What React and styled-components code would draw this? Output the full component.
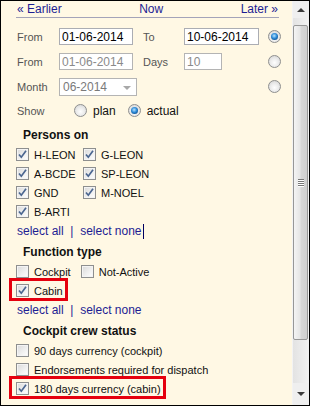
import React from "react";
import styled, { createGlobalStyle } from "styled-components";

const GlobalStyle = createGlobalStyle`
  html, body {
    margin: 0;
    padding: 0;
    background: #fff;
  }
  body {
    font-family: "Liberation Sans", Arial, sans-serif;
  }
`;

const Frame = styled.div`
  width: 310px;
  height: 406px;
  box-sizing: border-box;
  border: 1px solid #000;
  background: #fff8e4;
  display: flex;
  overflow: hidden;
`;

const Content = styled.div`
  flex: 1;
  padding: 0 11px 0 15px;
  min-width: 0;
`;

const Nav = styled.div`
  display: flex;
  justify-content: space-between;
  height: 16px;
  line-height: 16px;
  padding: 0 1px;
  margin-right: 2px;
  border-bottom: 1px solid #a3a3b8;
  font-size: 12px;
  color: #1d1d93;
`;

const FormRows = styled.div`
  display: flex;
  flex-direction: column;
  gap: 8px;
  margin-top: 10px;
`;

const Row = styled.div`
  display: flex;
  align-items: center;
  height: 17px;
`;

const Label = styled.span`
  width: ${(p) => p.$w || 43}px;
  margin-left: ${(p) => p.$ml || 0}px;
  padding-left: 1px;
  box-sizing: border-box;
  font-size: 11px;
  color: #555;
  flex-shrink: 0;
`;

const Input = styled.input`
  width: ${(p) => p.$w}px;
  height: 17px;
  box-sizing: border-box;
  border: 1px solid ${(p) => (p.disabled ? "#b4b4b4" : "#abadb3")};
  background: #fff;
  padding: 0 2px;
  font-family: "Liberation Sans", Arial, sans-serif;
  font-size: 12px;
  color: ${(p) => (p.disabled ? "#8a8a8a" : "#000")};
  outline: none;
  flex-shrink: 0;
`;

const FakeSelect = styled.div`
  width: 78px;
  height: 18px;
  box-sizing: border-box;
  border: 1px solid #b4b4b4;
  background: #fff;
  display: flex;
  align-items: center;
  justify-content: space-between;
  padding: 0 5px 0 3px;
  font-size: 12px;
  color: #7a7a7a;

  &::after {
    content: "";
    border-left: 4px solid transparent;
    border-right: 4px solid transparent;
    border-top: 4px solid #a8a8a8;
    margin-top: 2px;
  }
`;

const RightRadio = styled.span`
  margin-left: auto;
  display: flex;
`;

const Radio = styled.span`
  width: 13px;
  height: 13px;
  box-sizing: border-box;
  border-radius: 50%;
  border: 1px solid #8e8f8f;
  background: radial-gradient(circle at 50% 60%, #fefefe 0%, #ececec 45%, #cfcfcf 100%);
  display: inline-flex;
  align-items: center;
  justify-content: center;
  flex-shrink: 0;

  &::after {
    content: "";
    width: 7px;
    height: 7px;
    border-radius: 50%;
    display: ${(p) => (p.$on ? "block" : "none")};
    background: radial-gradient(circle at 45% 40%, #b8e4ff 0%, #2c8ad8 45%, #0d4f8e 80%, #183a5e 100%);
  }
`;

const ShowRow = styled.div`
  display: flex;
  align-items: center;
  height: 19px;
  margin: 6px 0 7px;
  font-size: 12px;
  color: #111;
`;

const Option = styled.label`
  display: inline-flex;
  align-items: center;
  gap: 6px;
  margin-right: 12px;
`;

const Heading = styled.div`
  height: 16px;
  line-height: 16px;
  margin: 3px 0 2px;
  padding-left: 7px;
  font-size: 12px;
  font-weight: bold;
  color: #111;
`;

const CheckGrid = styled.div`
  display: grid;
  grid-template-columns: 67px 67px;
`;

const CheckList = styled.div`
  display: flex;
  flex-wrap: wrap;
  align-items: center;
`;

const CheckRow = styled.label`
  position: relative;
  display: inline-flex;
  align-items: center;
  gap: 5px;
  height: 19px;
  margin-right: 10px;
  font-size: 11px;
  color: #111;
  white-space: nowrap;

  &::after {
    content: "";
    display: ${(p) => (p.$marked ? "block" : "none")};
    position: absolute;
    left: -7px;
    right: -5px;
    top: -3px;
    bottom: -1px;
    border: 3px solid #e5000e;
  }
`;

const LineBreak = styled.div`
  flex-basis: 100%;
  height: 0;
`;

const Box = styled.span`
  width: 13px;
  height: 13px;
  box-sizing: border-box;
  border: 1px solid #8e8f8f;
  background: linear-gradient(135deg, #d9d9d9 0%, #f1f1f1 60%, #ffffff 100%);
  box-shadow: inset 0 0 0 1px #f4f4f4;
  display: inline-flex;
  flex-shrink: 0;

  svg {
    display: block;
  }
`;

const Links = styled.div`
  height: 19px;
  line-height: 19px;
  margin-top: 1px;
  padding-left: 1px;
  font-size: 12px;
  color: #1d1d93;
  display: flex;
  align-items: center;
  white-space: pre;
`;

const Caret = styled.span`
  width: 1px;
  height: 15px;
  background: #000060;
  margin-left: 1px;
`;

const Scrollbar = styled.div`
  width: 16px;
  display: flex;
  flex-direction: column;
  background: #eaeaea;
  border-left: 1px solid #f3f3f3;
`;

const ScrollButton = styled.div`
  height: ${(p) => p.$h}px;
  display: flex;
  align-items: center;
  justify-content: center;
  background: #efefef;

  &::after {
    content: "";
    border-left: 4px solid transparent;
    border-right: 4px solid transparent;
    ${(p) => (p.$down ? "border-top" : "border-bottom")}: 4px solid #3a3a3a;
  }
`;

const Track = styled.div`
  flex: 1;
  display: flex;
  flex-direction: column;
  padding: 7px 0 0;
  background: linear-gradient(to right, #e3e3e3, #f2f2f2);
`;

const Thumb = styled.div`
  height: 315px;
  margin: 0 1px 0 0;
  box-sizing: border-box;
  border: 1px solid #979797;
  border-radius: 2px;
  background: linear-gradient(to right, #f4f4f4 0%, #e6e6e6 45%, #d6d6d6 55%, #cfcfcf 100%);
  display: flex;
  flex-direction: column;
  align-items: center;
  justify-content: center;
  gap: 1px;
`;

const Grip = styled.span`
  width: 6px;
  height: 1px;
  background: #777;
  box-shadow: 0 1px 0 #fff;
`;

function Checkbox({ checked }) {
  return (
    <Box>
      {checked && (
        <svg width="11" height="11" viewBox="0 0 11 11">
          <path
            d="M2 5.5 L4.3 8.2 L9 1.8"
            fill="none"
            stroke="#4b6690"
            strokeWidth="1.7"
          />
        </svg>
      )}
    </Box>
  );
}

function Check({ label, checked, marked }) {
  return (
    <CheckRow $marked={marked}>
      <Checkbox checked={checked} />
      {label}
    </CheckRow>
  );
}

function SelectLinks({ caret }) {
  return (
    <Links>
      {"select all  |  select none"}
      {caret && <Caret />}
    </Links>
  );
}

const persons = ["H-LEON", "G-LEON", "A-BCDE", "SP-LEON", "GND", "M-NOEL", "B-ARTI"];

export default function App() {
  return (
    <>
      <GlobalStyle />
      <Frame>
        <Content>
          <Nav>
            <span>« Earlier</span>
            <span>Now</span>
            <span>Later »</span>
          </Nav>

          <FormRows>
            <Row>
              <Label>From</Label>
              <Input $w={74} defaultValue="01-06-2014" />
              <Label $ml={9} $w={42}>To</Label>
              <Input $w={75} defaultValue="10-06-2014" />
              <RightRadio>
                <Radio $on />
              </RightRadio>
            </Row>
            <Row>
              <Label>From</Label>
              <Input $w={74} disabled defaultValue="01-06-2014" />
              <Label $ml={9} $w={42}>Days</Label>
              <Input $w={38} disabled defaultValue="10" />
              <RightRadio>
                <Radio />
              </RightRadio>
            </Row>
            <Row>
              <Label>Month</Label>
              <FakeSelect>06-2014</FakeSelect>
              <RightRadio>
                <Radio />
              </RightRadio>
            </Row>
          </FormRows>

          <ShowRow>
            <Label $w={58}>Show</Label>
            <Option>
              <Radio />
              plan
            </Option>
            <Option>
              <Radio $on />
              actual
            </Option>
          </ShowRow>

          <Heading>Persons on</Heading>
          <CheckGrid>
            {persons.map((p) => (
              <Check key={p} label={p} checked />
            ))}
          </CheckGrid>
          <SelectLinks caret />

          <Heading>Function type</Heading>
          <CheckList>
            <Check label="Cockpit" />
            <Check label="Not-Active" />
            <LineBreak />
            <Check label="Cabin" checked marked />
          </CheckList>
          <SelectLinks />

          <Heading>Cockpit crew status</Heading>
          <CheckList>
            <Check label="90 days currency (cockpit)" />
            <LineBreak />
            <Check label="Endorsements required for dispatch" />
            <LineBreak />
            <Check label="180 days currency (cabin)" checked marked />
          </CheckList>
        </Content>

        <Scrollbar>
          <ScrollButton $h={17} />
          <Track>
            <Thumb>
              <Grip />
              <Grip />
              <Grip />
              <Grip />
            </Thumb>
          </Track>
          <ScrollButton $h={22} $down />
        </Scrollbar>
      </Frame>
    </>
  );
}
